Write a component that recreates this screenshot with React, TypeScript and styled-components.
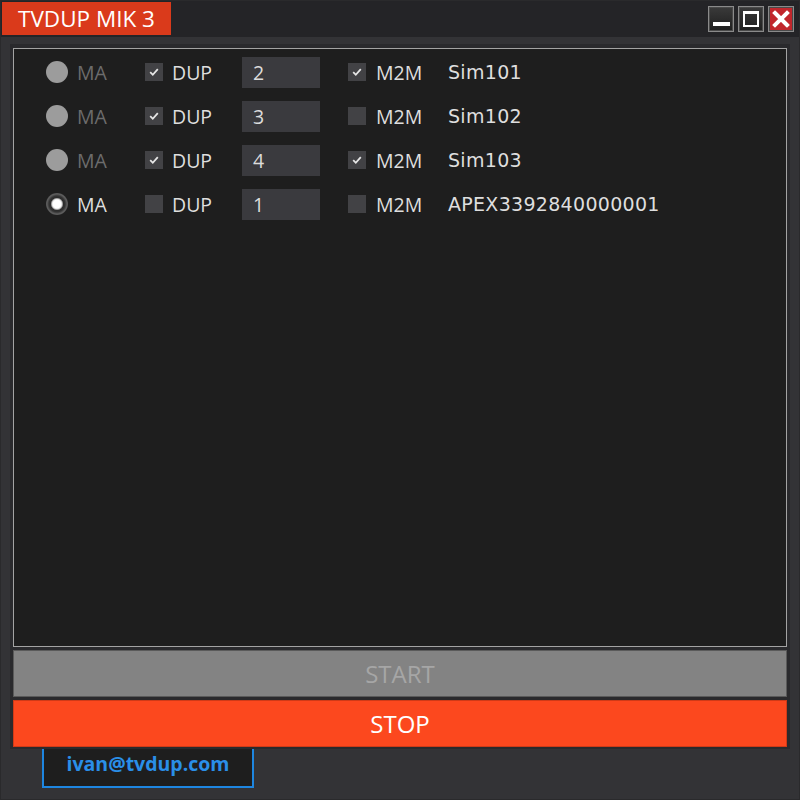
import React from "react";
import styled, { createGlobalStyle } from "styled-components";

const Global = createGlobalStyle`
  html, body { margin: 0; padding: 0; background: #2d2d30; }
  body { font-family: "Open Sans", "Noto Sans", "Liberation Sans", sans-serif; }
  * { box-sizing: border-box; }
`;

const Window = styled.div`
  width: 800px;
  height: 800px;
  background: #333336;
  border: 1px solid #2a2a2c;
  display: flex;
  flex-direction: column;
  overflow: hidden;
`;

const TitleBar = styled.div`
  height: 36px;
  flex: none;
  background: #242427;
  display: flex;
  justify-content: space-between;
  align-items: flex-start;
`;

const TitleTab = styled.div`
  margin: 1px 0 0 1px;
  height: 33px;
  padding: 0 0 0 16px;
  width: 169px;
  background: #da3a1b;
  color: #ffffff;
  font-size: 22.5px;
  line-height: 33px;
  white-space: nowrap;
`;

const WinButtons = styled.div`
  display: flex;
  gap: 4px;
  margin: 5px 5px 0 0;
`;

const WinButton = styled.div<{ $close?: boolean }>`
  width: 26px;
  height: 26px;
  border: 1px solid #8a8a8a;
  box-shadow: inset 0 0 0 1px #4a4a4a;
  background: ${(p) =>
    p.$close ? "#c1262c" : "linear-gradient(#3a3a3a, #1e1e1e)"};
  display: flex;
  align-items: center;
  justify-content: center;
`;

const MinBar = styled.div`
  width: 17px;
  height: 4px;
  background: #ffffff;
  margin-top: 9px;
`;

const MaxBox = styled.div`
  width: 16px;
  height: 16px;
  border: 2px solid #ffffff;
  border-top-width: 3px;
`;

const Body = styled.div`
  flex: 1;
  display: flex;
  flex-direction: column;
  padding: 7px 9px 0 9px;
`;

const Panel = styled.div`
  background: #2a2a2d;
  padding: 4px 3px 2px 3px;
  display: flex;
  flex-direction: column;
  gap: 3px;
  position: relative;
  z-index: 1;
`;

const ListBox = styled.div`
  height: 599px;
  border: 1px solid #a3a3a3;
  background: #1e1e1e;
  padding-top: 1px;
  display: flex;
  flex-direction: column;
`;

const Row = styled.div`
  height: 44px;
  display: grid;
  grid-template-columns: 31px 68px 27px 70px 106px 28px 72px 1fr;
  align-items: center;
  padding-left: 32px;
`;

const Radio = styled.div<{ $checked?: boolean }>`
  width: 22px;
  height: 22px;
  border-radius: 50%;
  background: ${(p) =>
    p.$checked
      ? "radial-gradient(circle, #ffffff 0 4px, #d8d8d8 5px, #2c2c2c 6.5px, #333 8px, #5e5e5e 10px, #555 11px)"
      : "#9c9c9c"};
`;

const Label = styled.span<{ $dim?: boolean }>`
  font-size: 19.5px;
  color: ${(p) => (p.$dim ? "#6c6c6c" : "#dedede")};
  white-space: nowrap;
`;

const Name = styled.span`
  font-family: "DejaVu Sans", "Open Sans", sans-serif;
  font-size: 19px;
  letter-spacing: 0.3px;
  color: #dedede;
  white-space: nowrap;
`;

const Check = styled.div`
  width: 18px;
  height: 18px;
  background: #424245;
  display: flex;
  align-items: center;
  justify-content: center;
`;

const NumBox = styled.div`
  width: 78px;
  height: 31px;
  background: #3a3a3e;
  color: #dcdcdc;
  font-size: 19.5px;
  line-height: 31px;
  padding-left: 11px;
`;

const ActionButton = styled.div<{ $variant: "start" | "stop" }>`
  height: 47px;
  display: flex;
  align-items: center;
  justify-content: center;
  padding-bottom: 1px;
  font-size: 24px;
  background: ${(p) => (p.$variant === "start" ? "#838383" : "#fc481e")};
  color: ${(p) => (p.$variant === "start" ? "#a6a6a6" : "#ffffff")};
  border: 1px solid ${(p) => (p.$variant === "start" ? "#5a5a5a" : "#d03a17")};
`;

const EmailBox = styled.div`
  margin: -2px 0 0 32px;
  width: 212px;
  height: 41px;
  border: 2px solid #1e86e0;
  border-top: none;
  background: #1e1e1e;
  color: #2a8fe8;
  font-weight: 700;
  font-size: 19.5px;
  display: flex;
  align-items: center;
  justify-content: center;
  padding-bottom: 6px;
`;

const Tick = () => (
  <svg width="12" height="12" viewBox="0 0 12 12">
    <path d="M2.2 6.2 L4.8 8.8 L9.8 3.2" fill="none" stroke="#e6e6e6" strokeWidth="1.8" />
  </svg>
);

const CloseX = () => (
  <svg width="20" height="20" viewBox="0 0 20 20">
    <path d="M4 4 L16 16 M16 4 L4 16" stroke="#ffffff" strokeWidth="4" strokeLinecap="square" />
  </svg>
);

type RowData = { ma: boolean; dup: boolean; num: string; m2m: boolean; name: string };

const rows: RowData[] = [
  { ma: false, dup: true, num: "2", m2m: true, name: "Sim101" },
  { ma: false, dup: true, num: "3", m2m: false, name: "Sim102" },
  { ma: false, dup: true, num: "4", m2m: true, name: "Sim103" },
  { ma: true, dup: false, num: "1", m2m: false, name: "APEX3392840000001" },
];

export default function App() {
  return (
    <>
      <Global />
      <Window>
        <TitleBar>
          <TitleTab>TVDUP MIK 3</TitleTab>
          <WinButtons>
            <WinButton>
              <MinBar />
            </WinButton>
            <WinButton>
              <MaxBox />
            </WinButton>
            <WinButton $close>
              <CloseX />
            </WinButton>
          </WinButtons>
        </TitleBar>
        <Body>
          <Panel>
            <ListBox>
              {rows.map((r, i) => (
                <Row key={i}>
                  <Radio $checked={r.ma} />
                  <Label $dim={!r.ma}>MA</Label>
                  <Check>{r.dup && <Tick />}</Check>
                  <Label>DUP</Label>
                  <NumBox>{r.num}</NumBox>
                  <Check>{r.m2m && <Tick />}</Check>
                  <Label>M2M</Label>
                  <Name>{r.name}</Name>
                </Row>
              ))}
            </ListBox>
            <ActionButton $variant="start">START</ActionButton>
            <ActionButton $variant="stop">STOP</ActionButton>
          </Panel>
          <EmailBox>ivan@tvdup.com</EmailBox>
        </Body>
      </Window>
    </>
  );
}
